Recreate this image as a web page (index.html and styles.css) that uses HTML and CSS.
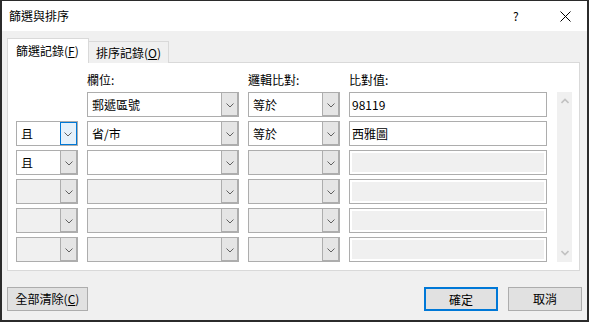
FILE: index.html
```html
<!DOCTYPE html>
<html lang="zh-Hant">
<head>
    <meta charset="UTF-8">
    <title>篩選與排序</title>
    <link rel="stylesheet" href="styles.css">
</head>
<body>

<div class="window">
    <div class="titlebar">
        <span class="title">篩選與排序</span>
        <span class="help">?</span>
        <svg class="close" width="11" height="11" viewBox="0 0 11 11"><path d="M0.5 0.5 L10.5 10.5 M10.5 0.5 L0.5 10.5" stroke="#000" stroke-width="1" fill="none"/></svg>
    </div>

    <div class="content">
        <div class="tabs">
            <div class="tab active">篩選記錄(<u>F</u>)</div>
            <div class="tab">排序記錄(<u>O</u>)</div>
        </div>

        <div class="panel">
            <div class="grid">
                <div></div>
                <div class="label">欄位:</div>
                <div class="label">邏輯比對:</div>
                <div class="label last">比對值:</div>

                <div class="scrollbar">
                    <svg width="8" height="6" viewBox="0 0 8 6"><polyline points="0.5,5 4,1.5 7.5,5" stroke="#c2c2c2" stroke-width="1.6" fill="none"/></svg>
                    <svg width="8" height="6" viewBox="0 0 8 6"><polyline points="0.5,1 4,4.5 7.5,1" stroke="#c2c2c2" stroke-width="1.6" fill="none"/></svg>
                </div>

                <!-- row 1 -->
                <div class="empty"></div>
                <div class="combo"><span class="text">郵遞區號</span><span class="drop"></span></div>
                <div class="combo"><span class="text">等於</span><span class="drop"></span></div>
                <div class="field">98119</div>

                <!-- row 2 -->
                <div class="combo"><span class="text">且</span><span class="drop focus"></span></div>
                <div class="combo"><span class="text">省/市</span><span class="drop"></span></div>
                <div class="combo"><span class="text">等於</span><span class="drop"></span></div>
                <div class="field">西雅圖</div>

                <!-- row 3 -->
                <div class="combo"><span class="text">且</span><span class="drop"></span></div>
                <div class="combo"><span class="text"></span><span class="drop"></span></div>
                <div class="combo disabled"><span class="text"></span><span class="drop"></span></div>
                <div class="field disabled"></div>

                <!-- row 4 -->
                <div class="combo disabled"><span class="text"></span><span class="drop"></span></div>
                <div class="combo disabled"><span class="text"></span><span class="drop"></span></div>
                <div class="combo disabled"><span class="text"></span><span class="drop"></span></div>
                <div class="field disabled"></div>

                <!-- row 5 -->
                <div class="combo disabled"><span class="text"></span><span class="drop"></span></div>
                <div class="combo disabled"><span class="text"></span><span class="drop"></span></div>
                <div class="combo disabled"><span class="text"></span><span class="drop"></span></div>
                <div class="field disabled"></div>

                <!-- row 6 -->
                <div class="combo disabled"><span class="text"></span><span class="drop"></span></div>
                <div class="combo disabled"><span class="text"></span><span class="drop"></span></div>
                <div class="combo disabled"><span class="text"></span><span class="drop"></span></div>
                <div class="field disabled"></div>
            </div>
        </div>

        <div class="footer">
            <button class="btn">全部清除(<u>C</u>)</button>
            <span class="spacer"></span>
            <button class="btn default">確定</button>
            <button class="btn">取消</button>
        </div>
    </div>
</div>

</body>
</html>
```

FILE: styles.css
```css
html, body {
    margin: 0;
    padding: 0;
}
body {
    font-family: "Noto Sans CJK TC", "Noto Sans", sans-serif;
    font-size: 12px;
    color: #000;
    width: 589px;
    height: 322px;
    overflow: hidden;
}
.window {
    box-sizing: border-box;
    width: 589px;
    height: 322px;
    border: 2px solid #2b2b2b;
    border-top-width: 1px;
    background-color: #f0f0f0;
    display: flex;
    flex-direction: column;
}
.titlebar {
    height: 30px;
    background-color: #fff;
    display: flex;
    align-items: center;
    padding-left: 7px;
    flex-shrink: 0;
}
.title {
    flex: 1;
    line-height: 14px;
}
.help {
    width: 10px;
    margin-right: 37px;
    line-height: 14px;
}
.close {
    margin-right: 16px;
}
.content {
    padding: 8px 5px 0 5px;
    display: flex;
    flex-direction: column;
}
.tabs {
    display: flex;
    align-items: flex-end;
    height: 24px;
    margin-bottom: -1px;
    position: relative;
    z-index: 1;
}
.tab {
    box-sizing: border-box;
    height: 22px;
    width: 81px;
    border: 1px solid #d9d9d9;
    border-bottom: none;
    background-color: #f0f0f0;
    padding-left: 7px;
    line-height: 21px;
    margin-left: -1px;
}
.tab:first-child {
    margin-left: 0;
}
.tab.active {
    height: 25px;
    width: 82px;
    background-color: #fff;
    padding-left: 8px;
    line-height: 24px;
}
.tab u, .btn u {
    text-underline-offset: 1px;
}
.panel {
    box-sizing: border-box;
    width: 573px;
    height: 209px;
    background-color: #fff;
    border: 1px solid #d9d9d9;
    padding: 7px 0 0 8px;
}
.grid {
    display: grid;
    grid-template-columns: 62px 152px 92px 198px 16px;
    grid-template-rows: 18px repeat(6, 25px);
    column-gap: 9px;
    row-gap: 4px;
}
.label {
    line-height: 18px;
    padding-top: 1px;
}
.label.last {
    grid-column: span 2;
}
.scrollbar {
    grid-column: 5;
    grid-row: 2 / span 6;
    margin-left: 1px;
    background-color: #f0f0f0;
    display: flex;
    flex-direction: column;
    justify-content: space-between;
    align-items: center;
    padding: 6px 0 6px 0;
}
.combo {
    box-sizing: border-box;
    height: 25px;
    border: 1px solid #adadad;
    background-color: #fff;
    display: flex;
}
.combo .text {
    flex: 1;
    padding-left: 4px;
    line-height: 23px;
}
.drop {
    box-sizing: border-box;
    width: 17px;
    background-color: #e5e5e5;
    border: 1px solid #adadad;
    border-width: 0 0 0 1px;
    box-shadow: inset -1px -1px 0 #adadad;
    background-image: url("data:image/svg+xml,%3Csvg xmlns='http://www.w3.org/2000/svg' width='8' height='5'%3E%3Cpolyline points='0.5,0.5 4,4 7.5,0.5' stroke='%23606060' stroke-width='1' fill='none'/%3E%3C/svg%3E");
    background-repeat: no-repeat;
    background-position: 4px 10px;
}
.drop.focus {
    border: 1px solid #0078d7;
    box-shadow: none;
    background-color: #e5f1fb;
    background-position: 3px 9px;
}
.combo.disabled {
    background-color: #f0f0f0;
}
.field {
    box-sizing: border-box;
    height: 25px;
    border: 1px solid #adadad;
    background-color: #fff;
    padding-left: 2px;
    line-height: 23px;
}
.field.disabled {
    background-color: #f0f0f0;
    box-shadow: inset 0 0 0 2px #fff;
}
.footer {
    display: flex;
    margin-top: 16px;
    gap: 10px;
}
.spacer {
    flex: 1;
}
.btn {
    box-sizing: border-box;
    height: 24px;
    width: 74px;
    border: 1px solid #adadad;
    background-color: #e1e1e1;
    font-family: inherit;
    font-size: 12px;
    color: #000;
    padding: 0;
    line-height: 22px;
}
.btn:first-child {
    width: 81px;
}
.btn.default {
    border: 2px solid #0078d7;
}
```
